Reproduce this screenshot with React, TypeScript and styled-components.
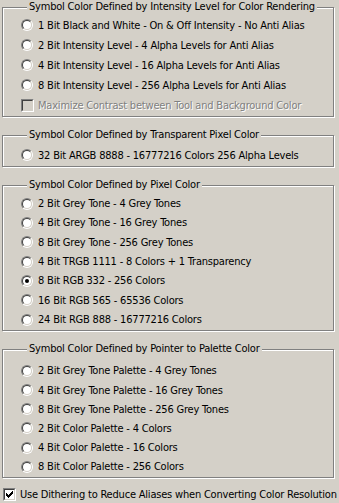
import React from 'react';
import styled, { createGlobalStyle } from 'styled-components';

const GlobalStyle = createGlobalStyle`
  html, body { margin: 0; padding: 0; background: #D4D0C8; }
  body {
    font-family: "DejaVu Sans Condensed", "DejaVu Sans", sans-serif;
    font-size: 11px;
    letter-spacing: -0.2px;
    color: #000;
  }
`;

const Page = styled.div`
  width: 339px;
  height: 503px;
  box-sizing: border-box;
  padding: 0 5px 0 2px;
  display: flex;
  flex-direction: column;
  overflow: hidden;
`;

const Group = styled.fieldset<{ $top: number; $bottom: number; $gap: number }>`
  margin: ${p => p.$gap}px 0 0 0;
  padding: ${p => p.$top}px 0 ${p => p.$bottom}px 18px;
  min-width: 0;
  border: 1px solid #808080;
  box-shadow: inset 1px 1px 0 #fff, 1px 1px 0 #fff;
  display: flex;
  flex-direction: column;
`;

const Legend = styled.legend`
  margin-left: 6px;
  padding: 0 2px;
  line-height: 14px;
  background: #D4D0C8;
  white-space: nowrap;
`;

const Row = styled.label<{ $h: number }>`
  display: flex;
  align-items: center;
  height: ${p => p.$h}px;
  white-space: nowrap;
`;

const RadioCircle = styled.span<{ $checked?: boolean }>`
  position: relative;
  flex: none;
  width: 12px;
  height: 12px;
  box-sizing: border-box;
  border-radius: 50%;
  border: 1px solid;
  border-color: #808080 #fff #fff #808080;
  margin-right: 5px;
  &::before {
    content: '';
    position: absolute;
    inset: 0;
    border-radius: 50%;
    border: 1px solid;
    border-color: #404040 #D4D0C8 #D4D0C8 #404040;
    background: #fff;
  }
  &::after {
    content: '';
    position: absolute;
    left: 3px;
    top: 3px;
    width: 4px;
    height: 4px;
    border-radius: 50%;
    background: #000;
    display: ${p => (p.$checked ? 'block' : 'none')};
  }
`;

const CheckBox = styled.span<{ $disabled?: boolean }>`
  position: relative;
  flex: none;
  width: 13px;
  height: 13px;
  box-sizing: border-box;
  border: 1px solid;
  border-color: #808080 #fff #fff #808080;
  margin-right: 4px;
  &::before {
    content: '';
    position: absolute;
    inset: 0;
    border: 1px solid;
    border-color: #404040 #D4D0C8 #D4D0C8 #404040;
    background: ${p => (p.$disabled ? '#D4D0C8' : '#fff')};
  }
  svg {
    position: absolute;
    left: 2px;
    top: 2px;
  }
`;

const Text = styled.span<{ $disabled?: boolean }>`
  color: ${p => (p.$disabled ? '#808080' : '#000')};
  text-shadow: ${p => (p.$disabled ? '1px 1px 0 #fff' : 'none')};
`;

const BottomRow = styled.label`
  display: flex;
  align-items: center;
  height: 14px;
  margin-top: 9px;
  padding-left: 1px;
  white-space: nowrap;
`;

const CheckMark = () => (
  <svg width="7" height="7" viewBox="0 0 7 7" shapeRendering="crispEdges">
    <path d="M0 2h1v3H0zM1 3h1v3H1zM2 4h1v3H2zM3 3h1v3H3zM4 2h1v3H4zM5 1h1v3H5zM6 0h1v3H6z" fill="#000" />
  </svg>
);

type Item = { label: string; checked?: boolean };
type GroupDef = { title: string; items: Item[]; rowH: number; top: number; bottom: number; gap: number };

const groups: GroupDef[] = [
  {
    title: 'Symbol Color Defined by Intensity Level for Color Rendering',
    items: [
      { label: '1 Bit Black and White - On & Off Intensity - No Anti Alias' },
      { label: '2 Bit Intensity Level - 4 Alpha Levels for Anti Alias' },
      { label: '4 Bit Intensity Level - 16 Alpha Levels for Anti Alias' },
      { label: '8 Bit Intensity Level - 256 Alpha Levels for Anti Alias' },
    ],
    rowH: 20,
    top: 1,
    bottom: 1,
    gap: 0,
  },
  {
    title: 'Symbol Color Defined by Transparent Pixel Color',
    items: [{ label: '32 Bit ARGB 8888 - 16777216 Colors 256 Alpha Levels' }],
    rowH: 20,
    top: 3,
    bottom: 1,
    gap: 11,
  },
  {
    title: 'Symbol Color Defined by Pixel Color',
    items: [
      { label: '2 Bit Grey Tone - 4 Grey Tones' },
      { label: '4 Bit Grey Tone - 16 Grey Tones' },
      { label: '8 Bit Grey Tone - 256 Grey Tones' },
      { label: '4 Bit TRGB 1111 - 8 Colors + 1 Transparency' },
      { label: '8 Bit RGB 332 - 256 Colors', checked: true },
      { label: '16 Bit RGB 565 - 65536 Colors' },
      { label: '24 Bit RGB 888 - 16777216 Colors' },
    ],
    rowH: 19.33,
    top: 2,
    bottom: 1,
    gap: 11,
  },
  {
    title: 'Symbol Color Defined by Pointer to Palette Color',
    items: [
      { label: '2 Bit Grey Tone Palette - 4 Grey Tones' },
      { label: '4 Bit Grey Tone Palette - 16 Grey Tones' },
      { label: '8 Bit Grey Tone Palette - 256 Grey Tones' },
      { label: '2 Bit Color Palette - 4 Colors' },
      { label: '4 Bit Color Palette - 16 Colors' },
      { label: '8 Bit Color Palette - 256 Colors' },
    ],
    rowH: 19.2,
    top: 5,
    bottom: 1,
    gap: 11,
  },
];

export default function App() {
  return (
    <>
      <GlobalStyle />
      <Page>
        {groups.map((g, gi) => (
          <Group key={g.title} $top={g.top} $bottom={g.bottom} $gap={g.gap}>
            <Legend>{g.title}</Legend>
            {g.items.map(it => (
              <Row key={it.label} $h={g.rowH}>
                <RadioCircle $checked={it.checked} />
                <Text>{it.label}</Text>
              </Row>
            ))}
            {gi === 0 && (
              <Row $h={g.rowH}>
                <CheckBox $disabled />
                <Text $disabled>Maximize Contrast between Tool and Background Color</Text>
              </Row>
            )}
          </Group>
        ))}
        <BottomRow>
          <CheckBox>
            <CheckMark />
          </CheckBox>
          <Text>Use Dithering to Reduce Aliases when Converting Color Resolution</Text>
        </BottomRow>
      </Page>
    </>
  );
}
